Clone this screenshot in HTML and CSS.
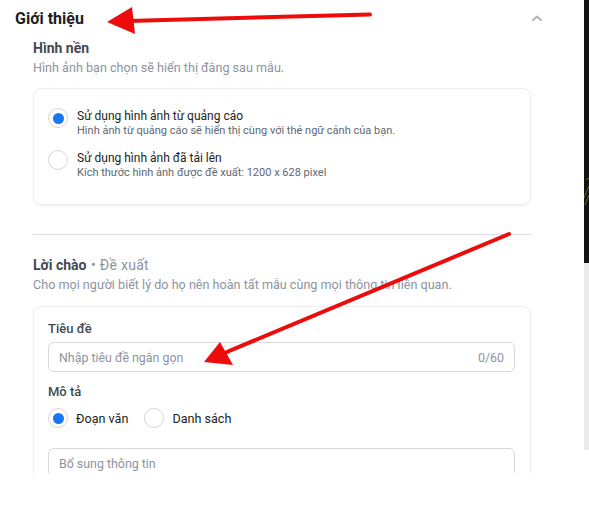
FILE: index.html
```html
<!DOCTYPE html>
<html lang="vi">
<head>
    <meta charset="UTF-8">
    <meta name="viewport" content="width=device-width, initial-scale=1.0">
    <title>Giới thiệu</title>
    <link rel="stylesheet" href="styles.css">
</head>
<body>
    <div class="page">
        <div class="panel">
            <div class="panel-header">
                <h2>Giới thiệu</h2>
                <svg class="chevron" width="12" height="8" viewBox="0 0 12 8">
                    <path d="M2 6 L6 2.5 L10 6" fill="none" stroke="#aeb3ba" stroke-width="2" stroke-linecap="round" stroke-linejoin="round"/>
                </svg>
            </div>

            <div class="panel-body">
                <div class="section-title">Hình nền</div>
                <div class="section-desc">Hình ảnh bạn chọn sẽ hiển thị đằng sau mẫu.</div>

                <div class="card card-options">
                    <div class="option">
                        <span class="radio checked"></span>
                        <div>
                            <div class="option-label">Sử dụng hình ảnh từ quảng cáo</div>
                            <div class="option-sub">Hình ảnh từ quảng cáo sẽ hiển thị cùng với thẻ ngữ cảnh của bạn.</div>
                        </div>
                    </div>
                    <div class="option">
                        <span class="radio"></span>
                        <div>
                            <div class="option-label">Sử dụng hình ảnh đã tải lên</div>
                            <div class="option-sub">Kích thước hình ảnh được đề xuất: 1200 x 628 pixel</div>
                        </div>
                    </div>
                </div>

                <hr class="divider">

                <div class="section-title greeting">Lời chào <span class="muted">• Đề xuất</span></div>
                <div class="section-desc">Cho mọi người biết lý do họ nên hoàn tất mẫu cùng mọi thông tin liên quan.</div>

                <div class="card card-form">
                    <div class="field-label">Tiêu đề</div>
                    <div class="input">
                        <span class="placeholder">Nhập tiêu đề ngắn gọn</span>
                        <span class="counter">0/60</span>
                    </div>

                    <div class="field-label spaced">Mô tả</div>
                    <div class="inline-options">
                        <span class="radio checked"></span>
                        <span class="inline-label">Đoạn văn</span>
                        <span class="radio"></span>
                        <span class="inline-label">Danh sách</span>
                    </div>

                    <div class="input input-bottom">
                        <span class="placeholder">Bổ sung thông tin</span>
                    </div>
                </div>
            </div>
        </div>

        <div class="side">
            <div class="side-dark">
                <svg width="5" height="263" viewBox="0 0 5 263">
                    <path d="M0 198 L5 186 M1 205 L5 195 M2 180 L5 178" stroke="#8a7a2a" stroke-width="0.8"/>
                </svg>
            </div>
            <div class="side-light"></div>
        </div>
    </div>

    <!-- annotation arrows drawn over the screenshot -->
    <svg class="annotations" width="589" height="525" viewBox="0 0 589 525">
        <line x1="370" y1="14.5" x2="128" y2="21" stroke="#ec0c0c" stroke-width="4" stroke-linecap="round"/>
        <polygon points="107,22 132,7 135,34" fill="#ec0c0c"/>
        <line x1="509" y1="234" x2="222" y2="354" stroke="#ec0c0c" stroke-width="4" stroke-linecap="round"/>
        <polygon points="204,362 220,342 233,365" fill="#ec0c0c"/>
    </svg>
</body>
</html>
```

FILE: styles.css
```css
body, html {
    margin: 0;
    background-color: white;
    font-family: Roboto, "Liberation Sans", Arial, sans-serif;
    color: #1c1e21;
}

.page {
    display: flex;
    width: 589px;
    height: 525px;
}

.panel {
    flex: 1;
    height: 473px;
    overflow: hidden;
}

.panel-header {
    height: 36px;
    display: flex;
    align-items: center;
    justify-content: space-between;
    padding: 0 41px 0 15px;
}

.panel-header h2 {
    margin: 0;
    font-size: 16px;
    font-weight: 700;
    color: #1c1e21;
}

.panel-body {
    padding: 0 53px 0 33px;
}

.section-title {
    margin-top: 2px;
    line-height: 20px;
    font-size: 14px;
    font-weight: 700;
    color: #444950;
}

.section-title .muted {
    font-weight: 400;
    color: #8d949e;
    margin-left: 1px;
    letter-spacing: 0.3px;
}

.section-desc {
    line-height: 20px;
    font-size: 12.6px;
    color: #8d949e;
}

.card {
    border: 1px solid #eceef1;
    border-radius: 8px;
    box-shadow: 0 1px 3px rgba(0, 0, 0, 0.06);
    background-color: white;
}

.card-options {
    margin-top: 10px;
    padding: 19px 14px 24px;
    display: flex;
    flex-direction: column;
    gap: 12px;
}

.option {
    display: flex;
    gap: 9px;
}

.radio {
    flex: none;
    box-sizing: border-box;
    width: 20px;
    height: 20px;
    border-radius: 50%;
    border: 1px solid #d8d5d0;
    display: flex;
    align-items: center;
    justify-content: center;
}

.radio.checked::after {
    content: "";
    width: 11px;
    height: 11px;
    border-radius: 50%;
    background-color: #1877f2;
}

.option-label {
    font-size: 12px;
    line-height: 16px;
    color: #1c1e21;
}

.option-sub {
    font-size: 11px;
    line-height: 14px;
    color: #606770;
}

.divider {
    margin: 29px 0 0;
    border: none;
    border-top: 1px solid #dadde1;
}

.greeting {
    margin-top: 20px;
}

.card-form {
    margin-top: 11px;
    padding: 12px 15px 20px 14px;
}

.field-label {
    font-size: 13px;
    line-height: 20px;
    font-weight: 500;
    color: #444950;
}

.field-label.spaced {
    margin-top: 10px;
}

.input {
    margin-top: 3px;
    height: 30px;
    box-sizing: border-box;
    border: 1px solid #d5d8dc;
    border-radius: 6px;
    display: flex;
    align-items: center;
    justify-content: space-between;
    padding: 0 10px;
    font-size: 12.4px;
}

.placeholder {
    color: #8d949e;
}

.counter {
    color: #8d949e;
}

.inline-options {
    margin-top: 6px;
    display: flex;
    align-items: center;
}

.inline-label {
    font-size: 12.6px;
    margin: 0 16px 0 8px;
    color: #1c1e21;
}

.input-bottom {
    margin-top: 20px;
}

.side {
    width: 5px;
    display: flex;
    flex-direction: column;
}

.side-dark {
    height: 263px;
    background-color: #141414;
}

.side-dark svg {
    display: block;
}

.side-light {
    height: 187px;
    background-color: #e9eaee;
}

.annotations {
    position: absolute;
    top: 0;
    left: 0;
    pointer-events: none;
}
```
